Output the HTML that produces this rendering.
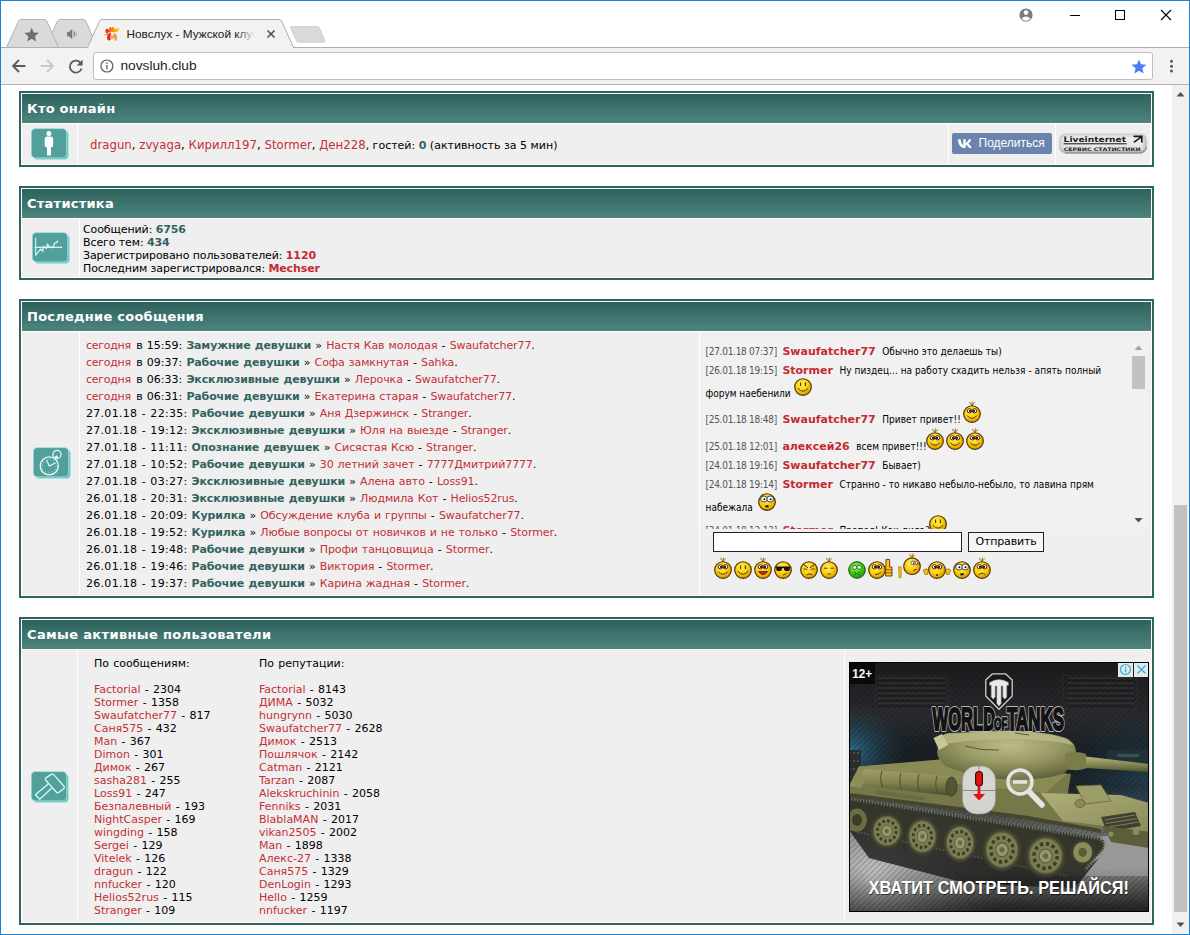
<!DOCTYPE html>
<html lang="ru">
<head>
<meta charset="utf-8">
<title>Новслух - Мужской клуб</title>
<style>
*{box-sizing:border-box;margin:0;padding:0}
html,body{width:1190px;height:935px;overflow:hidden;background:#fff}
body{position:relative;font-family:"DejaVu Sans","Liberation Sans",sans-serif;font-size:11px;color:#000}
.abs{position:absolute}
#frame{position:absolute;left:0;top:0;width:1190px;height:935px;border:1px solid #1883d7;z-index:50}
/* chrome */
#tabs{position:absolute;left:1px;top:1px;width:1188px;height:47px;background:#fff}
#toolbar{position:absolute;left:1px;top:47px;width:1188px;height:38px;background:#f2f2f2;border-top:1px solid #adadad;border-bottom:1px solid #b3b3b3}
#url{position:absolute;left:93px;top:52px;width:1060px;height:28px;background:#fff;border:1px solid #bdbdbd;border-radius:3px}
#urltext{position:absolute;left:120.500px;top:56px;font-family:"Liberation Sans",sans-serif;font-size:13.700px;line-height:20px;color:#222}
/* page */
#sb{position:absolute;left:1172px;top:85px;width:17px;height:849px;background:#f1f1f1}
#sb .thumb{position:absolute;left:2px;top:420px;width:13px;height:407px;background:#c1c1c1}
.panel{position:absolute;left:19px;width:1135px;border:2px solid #2d6560;background:#fff}
.hd{position:absolute;left:1px;top:1px;right:1px;height:29px;background:linear-gradient(#2d615c,#4e857f);color:#fff;font-weight:bold;font-size:13px;line-height:29px;padding-left:5px;letter-spacing:0.25px}
.cell{position:absolute;background:#efefef}
a{color:#c42f36;text-decoration:none}
b.t{color:#32635f}
b.r{color:#c42b32}
.cl{position:absolute;left:5.500px;white-space:nowrap;line-height:19px;font-family:"DejaVu Sans Condensed","DejaVu Sans",sans-serif;font-size:10px;color:#000}
.ts{font-size:10px;color:#555;margin-right:5.500px;letter-spacing:-.28px}
.cm{letter-spacing:.04px}.cu{font-family:"DejaVu Sans",sans-serif;font-size:11px;color:#c42b32;font-weight:bold;margin-right:6.500px}
#p3t{word-spacing:.6px}.d1{letter-spacing:.29px}.d2{letter-spacing:0}.sg{letter-spacing:-.28px;margin-right:1.400px}#p3t b{letter-spacing:-.13px}#p3t a{letter-spacing:-.1px}#p3t a.sg{letter-spacing:-.28px}
.ico{position:absolute;width:38px;height:32px}
.tx{position:absolute;white-space:nowrap}
</style>
</head>
<body>
<div id="tabs"></div>
<div id="toolbar"></div>
<div id="url"></div>
<div id="urltext">novsluh.club</div>
<svg id="tabsvg" class="abs" style="left:0;top:0" width="1190" height="86" viewBox="0 0 1190 86">
 <line x1="1" y1="47.5" x2="1189" y2="47.5" stroke="#adadad"/>
 <!-- tab 2 -->
 <path d="M45.5 47.5 L57.6 21 Q58.5 19.5 60 19.5 L83.5 19.5 Q85 19.5 85.8 21 L97.5 47.5 Z" fill="#dadada" stroke="#b2b2b2"/>
 <!-- tab 1 -->
 <path d="M6.5 47.5 L18.6 21 Q19.5 19.5 21 19.5 L44.5 19.5 Q46 19.5 46.8 21 L58.5 47.5 Z" fill="#dadada" stroke="#b2b2b2"/>
 <!-- active tab -->
 <path d="M87.5 47.5 L99.6 21 Q100.5 19.5 102 19.5 L279.2 19.5 Q280.7 19.5 281.5 21 L293.6 47.5" fill="#f2f2f2" stroke="#adadad"/>
 <rect x="88.2" y="47" width="204.8" height="2" fill="#f2f2f2"/>
 <!-- new tab button -->
 <path d="M291 26.5 L317.5 26.5 Q319 26.5 319.6 28 L325 41 Q325.4 42.3 324 42.3 L298.5 42.3 Q297 42.3 296.4 41 L290.6 28 Q290.2 26.5 291.6 26.5 Z" fill="#d9d9d9" stroke="#c4c4c4" stroke-width=".6"/>
 <!-- star -->
 <path transform="translate(31.7 34.6) scale(.7)" d="M0 -10 L2.9 -3.1 L10.4 -2.5 L4.7 2.4 L6.4 9.7 L0 5.8 L-6.4 9.7 L-4.7 2.4 L-10.4 -2.5 L-2.9 -3.1 Z" fill="#6e6e6e"/>
 <!-- speaker -->
 <g fill="#7a7a7a"><path d="M67 32 L69 32 L72.2 29 L72.2 39.2 L69 36.2 L67 36.2 Z"/><rect x="73.6" y="31.3" width="1.1" height="5.6"/><rect x="75.7" y="32.2" width="1" height="3.8" fill="#9a9a9a"/></g>
 <!-- favicon rooster -->
 <defs><linearGradient id="fav" x1="0" x2="1" y1="0" y2="0"><stop offset="0" stop-color="#f01414"/><stop offset=".3" stop-color="#f3601a"/><stop offset=".65" stop-color="#f7a51c"/><stop offset="1" stop-color="#f8e020"/></linearGradient></defs>
 <g>
  <path d="M105.600 31.800 Q105 28.800 107.200 28.800 Q108.400 29 108.800 30 Q108.800 27.200 110.300 27 Q111.200 27 111.600 28.400 Q111.800 26.800 112.800 26.800 Q113.800 27 114 28.800 Q114.400 27.800 115.200 28 Q116 28.300 116 29.400 Q117.500 27.600 119 27.900 Q119.800 29 119.200 30.600 Q117.600 32.600 114.600 32.300 Q111 31.200 108.600 32.400 Q107.800 33.600 106.800 33.400 Q105.800 33 105.600 31.800 Z" fill="url(#fav)"/>
  <path d="M104.200 34.400 L106.900 33.600 L107.200 35 L104.600 35.600 Z" fill="#f2b21a"/>
  <path d="M107.300 33.600 Q108.600 34.400 109.400 33 L110.400 32.500 L111.200 33.600 Q109.800 36 110.600 39.600 Q109.600 41 108.200 40.300 Q106.600 39.200 107 37 Q108 35.200 107.300 33.600 Z" fill="#ef2c12"/>
  <path d="M111.300 35.400 L112.700 35 L112.600 38.800 L111.300 39.800 Z" fill="#f29a3a"/>
  <path d="M113.900 33 Q115.800 33.600 116.500 36 Q117 38.600 115.800 40.800 L114.400 40.400 Q115.200 38 114.400 36.400 L113 39.600 L112.400 39 Q113.400 36 113.900 33 Z" fill="#f39a18"/>
  <path d="M116.200 34.500 Q117.400 37.500 116.200 40.500" stroke="#4a4a6a" stroke-width=".5" fill="none" opacity=".5"/>
 </g>
 <text x="126.5" y="38" font-family="Liberation Sans, sans-serif" font-size="11.800" fill="#202020" clip-path="url(#tclip)">Новслух - Мужской клуб</text>
 <rect x="236" y="22" width="24" height="22" fill="url(#tfade)"/>
 <defs><clipPath id="tclip"><rect x="120" y="20" width="139" height="26"/></clipPath><linearGradient id="tfade" x1="0" x2="1" y1="0" y2="0"><stop offset="0" stop-color="#f2f2f2" stop-opacity="0"/><stop offset=".8" stop-color="#f2f2f2"/></linearGradient></defs>
 <path d="M267.5 30.500 L274.500 37.500 M274.500 30.500 L267.500 37.500" stroke="#4a4a4a" stroke-width="1.5"/>
 <!-- account -->
 <g><circle cx="1026" cy="15" r="6.6" fill="#7b7b7b"/><circle cx="1026" cy="12.6" r="2.300" fill="#fff"/><path d="M1021.3 18.700 Q1026 14.400 1030.700 18.700 Q1026 22.600 1021.300 18.700 Z" fill="#fff"/></g>
 <!-- window controls -->
 <rect x="1070" y="15" width="10" height="1" fill="#000"/>
 <rect x="1115.500" y="10.500" width="9" height="9" fill="none" stroke="#000"/>
 <path d="M1161 10 L1171 20 M1171 10 L1161 20" stroke="#000" stroke-width="1.100"/>
 <!-- toolbar icons -->
 <g stroke="#5a5a5a" stroke-width="1.800" fill="none"><path d="M25.500 66 L13 66 M19 60 L13 66 L19 72"/></g>
 <g stroke="#c9c9c9" stroke-width="1.800" fill="none"><path d="M40.500 66 L53 66 M47 60 L53 66 L47 72"/></g>
 <g stroke="#5a5a5a" stroke-width="1.800" fill="none"><path d="M81 63.500 A6 6 0 1 0 81.600 68.500"/></g>
 <path d="M82.600 59.600 L82.600 65.400 L76.800 65.400 Z" fill="#5a5a5a"/>
 <g><circle cx="106.900" cy="66" r="6" fill="none" stroke="#5a5a5a" stroke-width="1.200"/><rect x="106.300" y="65" width="1.300" height="4.200" fill="#5a5a5a"/><rect x="106.300" y="62.600" width="1.300" height="1.400" fill="#5a5a5a"/></g>
 <path transform="translate(1139 66.600) scale(.72)" d="M0 -10 L2.900 -3.100 L10.400 -2.500 L4.700 2.400 L6.400 9.700 L0 5.800 L-6.400 9.700 L-4.700 2.400 L-10.400 -2.500 L-2.900 -3.100 Z" fill="#4f7df3"/>
 <g fill="#5a5a5a"><circle cx="1171.500" cy="61.300" r="1.500"/><circle cx="1171.500" cy="66.200" r="1.500"/><circle cx="1171.500" cy="71.100" r="1.500"/></g>
</svg>

<svg width="0" height="0" style="position:absolute">
<defs>
 <symbol id="tile" viewBox="0 0 38 32" overflow="visible">
  <rect x="2.300" y="2.500" width="35.400" height="29.200" rx="4.500" fill="#6cc3bb" stroke="#b7efe8" stroke-width=".8"/>
  <rect x=".2" y=".6" width="35.500" height="29.300" rx="4.200" fill="#52a09b" stroke="#b4ebe4" stroke-width=".7"/>
 </symbol>
 <radialGradient id="sg" cx=".42" cy=".35" r=".7"><stop offset="0" stop-color="#fff25e"/><stop offset=".5" stop-color="#fad010"/><stop offset="1" stop-color="#d98e00"/></radialGradient>
 <radialGradient id="gg" cx=".42" cy=".35" r=".7"><stop offset="0" stop-color="#9cf05a"/><stop offset=".6" stop-color="#3fc01c"/><stop offset="1" stop-color="#1f8a0c"/></radialGradient>
 <g id="face"><circle r="8.300" fill="url(#sg)" stroke="#4e3200" stroke-width="1.150"/></g>
 <g id="hair" stroke="#8a5a00" stroke-width=".9" fill="none"><path d="M0 -8.500 L-2.800 -12 M0 -8.500 L.4 -12.500 M0 -8.500 L2.800 -11.600"/></g>
 <g id="eyesw"><ellipse cx="-2.500" cy="-3.200" rx="2.300" ry="2.100" fill="#fff" stroke="#4a1818" stroke-width=".95"/><ellipse cx="2.500" cy="-3.200" rx="2.300" ry="2.100" fill="#fff" stroke="#4a1818" stroke-width=".95"/><circle cx="-1.900" cy="-3" r="1.150" fill="#2a0c0c"/><circle cx="2" cy="-3" r="1.150" fill="#2a0c0c"/></g>
 <g id="smile"><path d="M-4.600 1.800 Q0 6.800 4.600 1.800" fill="none" stroke="#5a3c00" stroke-width="1"/></g>
 <g id="sm_plain"><use href="#face"/><rect x="-3" y="-4.500" width="1.200" height="3.600" fill="#5a3c00"/><rect x="1.800" y="-4.500" width="1.200" height="3.600" fill="#5a3c00"/><path d="M-5.200 1.200 Q0 7.200 5.200 1.200" fill="none" stroke="#5a3c00" stroke-width="1"/></g>

 <g id="sm_eyes"><use href="#face"/><ellipse cx="-3" cy="-3" rx="3.300" ry="3" fill="#fff" stroke="#222" stroke-width=".8"/><ellipse cx="3.200" cy="-3" rx="3.300" ry="3" fill="#fff" stroke="#222" stroke-width=".8"/><circle cx="-2.600" cy="-2.800" r="1" fill="#111"/><circle cx="3.600" cy="-2.800" r="1" fill="#111"/><rect x="-1.600" y="3.300" width="3.200" height="2" fill="#111"/></g>
 <g id="sm_laugh"><use href="#hair"/><use href="#face"/><use href="#eyesw"/><path d="M-4.600 1.600 Q0 7.800 4.600 1.600 Z" fill="#e01818" stroke="#5a1c00" stroke-width=".8"/></g>
 <g id="sm_cool"><use href="#face"/><path d="M-8 -3.600 H8 L7 -2.400 L6.400 .6 Q4 1.600 1.600 .6 L.6 -2 H-.6 L-1.600 .6 Q-4 1.600 -6.400 .6 L-7 -2.400 Z" fill="#111"/><path d="M0 5 L3.400 3.600" stroke="#5a3c00" stroke-width="1" fill="none"/></g>
 <g id="sm_angry"><use href="#face"/><path d="M-5.600 -5.600 L-1 -2.200 M5.600 -5.600 L1 -2.200" stroke="#3a2000" stroke-width="1"/><path d="M-5 -2 L-1.600 -.6 L-5 -.2 Z M5 -2 L1.600 -.6 L5 -.2 Z" fill="#fff" stroke="#3a2000" stroke-width=".5"/><path d="M-2.600 5 Q0 3 3 4.600" stroke="#5a3c00" stroke-width="1" fill="none"/></g>
 <g id="sm_sleep"><use href="#hair"/><use href="#face"/><path d="M-5 -1.800 H-1.400 M1.400 -1.800 H5 M-1.400 4 H1.600" stroke="#5a3c00" stroke-width="1"/></g>
 <g id="sm_green"><circle r="8.300" fill="url(#gg)" stroke="#0c5a06" stroke-width="1"/><ellipse cx="-2.300" cy="-2.600" rx="2.100" ry="1.900" fill="#e8ffe0" stroke="#0c4a06" stroke-width=".7"/><ellipse cx="2.300" cy="-2.600" rx="2.100" ry="1.900" fill="#e8ffe0" stroke="#0c4a06" stroke-width=".7"/><path d="M-2.600 1.600 L-.8 3.400 L-2.600 5.400 M2.600 1.600 L.8 3.400 L2.600 5.400" stroke="#0c4a06" stroke-width=".9" fill="none"/></g>
 <g id="sm_thumb"><use href="#face"/><use href="#eyesw"/><path d="M-2 4.600 Q1.600 4.600 4 2" stroke="#5a3c00" stroke-width="1" fill="none"/><path d="M9 -10.600 H12.600 V-3 H15 V6 H8.600 Z" fill="#f5c518" stroke="#6a2a10" stroke-width=".9"/><path d="M9 -.2 H15 M9 2.800 H15" stroke="#6a2a10" stroke-width=".7"/></g>
 <g id="sm_think"><g transform="translate(0 -3.800)"><use href="#hair"/><use href="#face"/><ellipse cx="1" cy="-3.200" rx="2.200" ry="1.900" fill="#fff" stroke="#5a2a2a" stroke-width=".7"/><ellipse cx="5" cy="-3.200" rx="2" ry="1.900" fill="#fff" stroke="#5a2a2a" stroke-width=".7"/><circle cx="1.600" cy="-3" r=".8" fill="#301010"/><circle cx="5.400" cy="-3" r=".8" fill="#301010"/><path d="M1 4.400 L4.600 3" stroke="#5a3c00" stroke-width="1"/></g><path d="M-13.400 -3.200 h2.600 v11 h-2.200 Z" fill="#f5c518" stroke="#b07800" stroke-width=".7"/></g>
 <g id="sm_shrug"><path d="M-13.600 0 q2.600 -2.400 5 0 l-1 4.400 h-2.600 Z M13.600 0 q-2.600 -2.400 -5 0 l1 4.400 h2.600 Z" fill="#f5c518" stroke="#a06a00" stroke-width=".8"/><use href="#face"/><use href="#eyesw"/><rect x="-1" y="4.400" width="2" height="1.400" fill="#3a2000"/></g>
 <g id="sm_sad"><use href="#hair"/><use href="#face"/><use href="#eyesw"/><path d="M-3.400 5 Q0 1.600 3.400 5" stroke="#5a3c00" stroke-width="1" fill="none"/></g>
 <g id="sm_hair"><use href="#hair"/><use href="#face"/><use href="#eyesw"/><use href="#smile"/></g>
</defs>
</svg>
<!-- PANEL 1 -->
<div class="panel" style="top:91px;height:76px">
 <div class="hd">Кто онлайн</div>
 <div class="cell" style="left:1px;top:31px;width:55px;height:40px"></div>
 <div class="cell" style="left:57px;top:31px;width:870px;height:40px"></div>
 <div class="cell" style="left:928px;top:31px;width:106px;height:40px"></div>
 <div class="cell" style="left:1035px;top:31px;width:94px;height:40px"></div>
 <svg class="ico" style="left:10px;top:35px" viewBox="0 0 38 32"><use href="#tile"/><g fill="#fdfefe"><circle cx="17.900" cy="5.600" r="2.500"/><rect x="13.700" y="8.400" width="8.500" height="11" rx="2.600"/><rect x="16" y="12" width="4" height="15.500" rx=".5"/></g></svg>
 <div class="abs" id="vk" style="left:931px;top:40px;width:100px;height:21px;background:#6b84ad;border-radius:2px">
  <svg class="abs" style="left:5.500px;top:5.500px" width="15" height="9.500" viewBox="0 0 30 19"><path fill="#fff" d="M0 .6 H5.200 C5.600 7 8.400 11.800 10.600 12.600 V.6 H15.400 V7.600 C18 7.200 20.600 4 21.600 .6 H26.400 C25.600 4.800 22.600 8 20.400 9.400 C22.600 10.400 26.200 13.400 27.600 18.400 H22.400 C21.200 15 18.600 12.200 15.400 11.800 V18.400 H14.400 C5.400 18.400 .3 11.600 0 .6 Z"/></svg>
  <div class="abs" style="left:26.500px;top:2.500px;font-family:'Liberation Sans',sans-serif;font-size:12px;line-height:15px;color:#fff;white-space:nowrap">Поделиться</div>
 </div>
 <svg class="abs" id="li" style="left:1038px;top:40px" width="88" height="21" viewBox="0 0 88 21">
  <defs><linearGradient id="lig" x1="0" x2="0" y1="0" y2="1"><stop offset="0" stop-color="#d4d4d4"/><stop offset=".25" stop-color="#ededed"/><stop offset=".75" stop-color="#e4e4e4"/><stop offset="1" stop-color="#a8a8a8"/></linearGradient><linearGradient id="lih" x1="0" x2="1" y1="0" y2="0"><stop offset="0" stop-color="#000" stop-opacity=".12"/><stop offset=".06" stop-color="#000" stop-opacity="0"/><stop offset=".94" stop-color="#000" stop-opacity="0"/><stop offset="1" stop-color="#000" stop-opacity=".18"/></linearGradient></defs>
  <rect x=".5" y=".8" width="87" height="19.400" rx="6" fill="url(#lig)" stroke="#c9c9c9" stroke-width=".6"/>
  <rect x=".5" y=".8" width="87" height="19.400" rx="6" fill="url(#lih)"/><path d="M6 20 H81 Q87 19 87.300 14" fill="none" stroke="#6a6a6a" stroke-width=".9" opacity=".8"/>
  <text x="4.600" y="9" font-family="DejaVu Sans, sans-serif" font-weight="bold" font-size="7.500" textLength="62.500" lengthAdjust="spacingAndGlyphs" fill="#1a1a1a">Liveinternet</text>
  <rect x="4.600" y="10.300" width="63" height="1" fill="#111"/>
  <path d="M74.500 3.400 H82.800 V9.400 M82.300 3.900 L74.800 9.400" fill="none" stroke="#1a1a1a" stroke-width="1.700"/>
  <text x="4.800" y="17.800" font-family="DejaVu Sans, sans-serif" font-weight="bold" font-size="4.800" textLength="77" lengthAdjust="spacingAndGlyphs" fill="#2a2a2a">СЕРВИС  СТАТИСТИКИ</text>
 </svg>
 <div class="tx" id="p1t" style="left:69px;top:44px;font-size:11px;line-height:16px"><span id="p1n" style="font-size:13px;letter-spacing:.02px;font-family:'DejaVu Sans Condensed','DejaVu Sans',sans-serif"><a>dragun</a>, <a>zvyaga</a>, <a>Кирилл197</a>, <a>Stormer</a>, <a>Ден228</a></span><span id="p1r">, гостей: <b class="t">0</b> (активность за 5 мин)</span></div>
</div>

<!-- PANEL 2 -->
<div class="panel" style="top:186px;height:94px">
 <div class="hd">Статистика</div>
 <div class="cell" style="left:1px;top:31px;width:57px;height:58px"></div>
 <div class="cell" style="left:59px;top:31px;width:1071px;height:58px"></div>
 <svg class="ico" style="left:11px;top:44px" viewBox="0 0 38 32"><use href="#tile"/><g fill="none" stroke="#e6fbf8" stroke-width="1"><path d="M3.700 5.700 V23.500"/><path d="M2.400 15.300 H30.200" stroke-width="1.200"/><path d="M3.700 23.200 L8.600 17.200 L10.700 19.100 L11.500 14.600 L14.300 16.300 L15.400 12.300 L17.300 14.600 L19.200 15.700 L21.400 14.600 L22.500 11.200 L24.800 10.600 L25.900 8.600" stroke-width="1.200"/></g></svg>
 <div class="tx" id="p2t" style="left:62px;top:34.500px;line-height:13px;letter-spacing:-.1px">Сообщений: <b class="t">6756</b><br>Всего тем: <b class="t">434</b><br>Зарегистрировано пользователей: <b class="r">1120</b><br>Последним зарегистрировался: <b class="r">Mechser</b></div>
</div>

<!-- PANEL 3 -->
<div class="panel" style="top:299px;height:299px">
 <div class="hd">Последние сообщения</div>
 <div class="cell" style="left:1px;top:31px;width:57px;height:263px"></div>
 <div class="cell" style="left:59px;top:31px;width:619px;height:263px"></div>
 <div class="cell" style="left:679px;top:31px;width:451px;height:263px"></div>
 <svg class="ico" style="left:12px;top:146px" viewBox="0 0 38 32"><use href="#tile"/><g fill="none" stroke="#e6fbf8"><circle cx="16.300" cy="18.900" r="9" stroke-width="1.400"/><circle cx="24" cy="7.500" r="4.100" stroke-width="1.200"/><path d="M21.300 10 L23.800 8.300 L25.300 10.300 L22.600 12" fill="#e6fbf8" stroke="none"/><path d="M13.600 12.900 L16.300 18.900 L22.300 16.100" stroke-width="1.100"/><g stroke-width="1" stroke-dasharray="1 2.560" opacity=".8"><circle cx="16.300" cy="18.900" r="6.800"/></g></g></svg>
<div id="chat" class="abs" style="left:679px;top:38px;width:447px;height:190px;overflow:hidden;background:#f1f1f1">
<div class="cl" style="top:2.7px"><span class="ts">[27.01.18 07:37]</span><b class="cu">Swaufatcher77</b><span class="cm">Обычно это делаешь ты)</span></div>
<div class="cl" style="top:21.7px"><span class="ts">[26.01.18 19:15]</span><b class="cu">Stormer</b><span class="cm">Ну пиздец... на работу схадить нельзя - апять полный</span></div>
<div class="cl" style="top:45.3px"><span class="cm0">форум наебенили</span></div>
<div class="cl" style="top:70.7px"><span class="ts">[25.01.18 18:48]</span><b class="cu">Swaufatcher77</b><span class="cm">Привет привет!!</span></div>
<div class="cl" style="top:97.7px"><span class="ts">[25.01.18 12:01]</span><b class="cu">алексей26</b><span class="cm">всем привет!!!</span></div>
<div class="cl" style="top:116.7px"><span class="ts">[24.01.18 19:16]</span><b class="cu">Swaufatcher77</b><span class="cm">Бывает)</span></div>
<div class="cl" style="top:135.7px"><span class="ts">[24.01.18 19:14]</span><b class="cu">Stormer</b><span class="cm">Странно - то никаво небыло-небыло, то лавина прям</span></div>
<div class="cl" style="top:158.7px"><span class="cm0">набежала</span></div>
<div class="cl" style="top:181.7px"><span class="ts">[24.01.18 12:12]</span><b class="cu">Stormer</b><span class="cm">Пропол! Как дила?</span></div>
<svg class="abs" style="left:86.4px;top:30.2px" width="34" height="30" viewBox="-17 -18 34 30"><use href="#sm_plain"/></svg>
<svg class="abs" style="left:255.4px;top:57.0px" width="34" height="30" viewBox="-17 -18 34 30"><use href="#sm_hair"/></svg>
<svg class="abs" style="left:217.5px;top:83.5px" width="34" height="30" viewBox="-17 -18 34 30"><use href="#sm_hair"/></svg>
<svg class="abs" style="left:237.7px;top:83.5px" width="34" height="30" viewBox="-17 -18 34 30"><use href="#sm_hair"/></svg>
<svg class="abs" style="left:257.5px;top:83.5px" width="34" height="30" viewBox="-17 -18 34 30"><use href="#sm_hair"/></svg>
<svg class="abs" style="left:49.5px;top:144.5px" width="34" height="30" viewBox="-17 -18 34 30"><use href="#sm_eyes"/></svg>
<svg class="abs" style="left:220.9px;top:167.0px" width="34" height="30" viewBox="-17 -18 34 30"><use href="#sm_plain"/></svg>
<div class="abs" style="left:430px;top:0;width:17px;height:190px;background:#f1f1f1"></div>
<div class="abs" style="left:432px;top:17px;width:13px;height:33px;background:#c1c1c1"></div>
<svg class="abs" style="left:430px;top:0" width="17" height="190"><path d="M4.500 11 L8.500 6.500 L12.500 11 Z" fill="#a3a3a3"/><path d="M4.500 179 L8.500 183.500 L12.500 179 Z" fill="#505050"/></svg>
</div>
<div class="abs" style="left:692px;top:231px;width:249px;height:20px;background:#fff;border:1px solid #222"></div>
<div class="abs" style="left:947px;top:231px;width:76px;height:20px;background:#f6f6f6;border:1px solid #222;font-size:11px;line-height:17px;text-align:center;letter-spacing:-.15px">Отправить</div>
<svg class="abs" style="left:684.9px;top:250.7px" width="34" height="30" viewBox="-17 -18 34 30"><use href="#sm_hair"/></svg>
<svg class="abs" style="left:705.0px;top:250.7px" width="34" height="30" viewBox="-17 -18 34 30"><use href="#sm_plain"/></svg>
<svg class="abs" style="left:725.1px;top:250.7px" width="34" height="30" viewBox="-17 -18 34 30"><use href="#sm_laugh"/></svg>
<svg class="abs" style="left:745.0px;top:250.7px" width="34" height="30" viewBox="-17 -18 34 30"><use href="#sm_cool"/></svg>
<svg class="abs" style="left:770.9px;top:250.7px" width="34" height="30" viewBox="-17 -18 34 30"><use href="#sm_angry"/></svg>
<svg class="abs" style="left:791.0px;top:250.7px" width="34" height="30" viewBox="-17 -18 34 30"><use href="#sm_sleep"/></svg>
<svg class="abs" style="left:819.0px;top:250.7px" width="34" height="30" viewBox="-17 -18 34 30"><use href="#sm_green"/></svg>
<svg class="abs" style="left:838.8px;top:250.7px" width="34" height="30" viewBox="-17 -18 34 30"><use href="#sm_thumb"/></svg>
<svg class="abs" style="left:874.0px;top:250.7px" width="34" height="30" viewBox="-17 -18 34 30"><use href="#sm_think"/></svg>
<svg class="abs" style="left:899.0px;top:250.7px" width="34" height="30" viewBox="-17 -18 34 30"><use href="#sm_shrug"/></svg>
<svg class="abs" style="left:924.0px;top:250.7px" width="34" height="30" viewBox="-17 -18 34 30"><use href="#sm_eyes"/></svg>
<svg class="abs" style="left:943.9px;top:250.7px" width="34" height="30" viewBox="-17 -18 34 30"><use href="#sm_sad"/></svg>
 <div class="tx" id="p3t" style="left:65px;top:36px;line-height:17px">
<a class="sg">сегодня</a> <span class="d2">в 15:59:</span> <b class="t">Замужние девушки</b> » <a>Настя Кав молодая</a> - <a>Swaufatcher77</a>.<br>
<a class="sg">сегодня</a> <span class="d2">в 09:37:</span> <b class="t">Рабочие девушки</b> » <a>Софа замкнутая</a> - <a>Sahka</a>.<br>
<a class="sg">сегодня</a> <span class="d2">в 06:33:</span> <b class="t">Эксклюзивные девушки</b> » <a>Лерочка</a> - <a>Swaufatcher77</a>.<br>
<a class="sg">сегодня</a> <span class="d2">в 06:31:</span> <b class="t">Рабочие девушки</b> » <a>Екатерина старая</a> - <a>Swaufatcher77</a>.<br>
<span class="d1">27.01.18 - 22:35:</span> <b class="t">Рабочие девушки</b> » <a>Аня Дзержинск</a> - <a>Stranger</a>.<br>
<span class="d1">27.01.18 - 19:12:</span> <b class="t">Эксклюзивные девушки</b> » <a>Юля на выезде</a> - <a>Stranger</a>.<br>
<span class="d1">27.01.18 - 11:11:</span> <b class="t">Опознание девушек</b> » <a>Сисястая Ксю</a> - <a>Stranger</a>.<br>
<span class="d1">27.01.18 - 10:52:</span> <b class="t">Рабочие девушки</b> » <a>30 летний зачет</a> - <a>7777Дмитрий7777</a>.<br>
<span class="d1">27.01.18 - 03:27:</span> <b class="t">Эксклюзивные девушки</b> » <a>Алена авто</a> - <a>Loss91</a>.<br>
<span class="d1">26.01.18 - 20:31:</span> <b class="t">Эксклюзивные девушки</b> » <a>Людмила Кот</a> - <a>Helios52rus</a>.<br>
<span class="d1">26.01.18 - 20:09:</span> <b class="t">Курилка</b> » <a>Обсуждение клуба и группы</a> - <a>Swaufatcher77</a>.<br>
<span class="d1">26.01.18 - 19:52:</span> <b class="t">Курилка</b> » <a>Любые вопросы от новичков и не только</a> - <a>Stormer</a>.<br>
<span class="d1">26.01.18 - 19:48:</span> <b class="t">Рабочие девушки</b> » <a>Профи танцовщица</a> - <a>Stormer</a>.<br>
<span class="d1">26.01.18 - 19:46:</span> <b class="t">Рабочие девушки</b> » <a>Виктория</a> - <a>Stormer</a>.<br>
<span class="d1">26.01.18 - 19:37:</span> <b class="t">Рабочие девушки</b> » <a>Карина жадная</a> - <a>Stormer</a>.
 </div>
</div>

<!-- PANEL 4 -->
<div class="panel" style="top:617px;height:308px">
 <div class="hd" style="letter-spacing:.36px">Самые активные пользователи</div>
 <div class="cell" style="left:1px;top:31px;width:55px;height:272px"></div>
 <div class="cell" style="left:57px;top:31px;width:766px;height:272px"></div>
 <div class="cell" style="left:824px;top:31px;width:306px;height:272px"></div>
 <svg class="ico" style="left:10px;top:151.500px" viewBox="0 0 38 32"><use href="#tile"/><g fill="none" stroke="#dcf7f3" stroke-width="1.300" stroke-linejoin="round"><path d="M15.300 6.600 L20.300 3.400 Q21.800 2.600 23 3.900 L33 15.200 Q34 16.700 32.600 17.800 L28 21.300 Q26.400 22.300 25.200 21 L14.800 9.300 Q13.800 7.700 15.300 6.600 Z"/><path d="M17.500 12.700 L4.400 23.800 L8.700 28.200 L20.800 17"/></g></svg>
<svg id="ad" class="abs" style="left:828px;top:43px" width="300" height="250" viewBox="0 0 300 250">
<defs>
 <linearGradient id="abg" x1="0" x2="0" y1="0" y2="1">
  <stop offset="0" stop-color="#1b1c1e"/><stop offset=".22" stop-color="#2a2c2f"/><stop offset=".36" stop-color="#191f24"/><stop offset=".5" stop-color="#1d2326"/><stop offset=".6" stop-color="#4a4b4b"/><stop offset=".72" stop-color="#777878"/><stop offset=".86" stop-color="#7d7d7c"/><stop offset="1" stop-color="#3c3b38"/></linearGradient>
 <radialGradient id="aglowL" cx="0" cy=".36" r=".2" gradientTransform="scale(1 1)"><stop offset="0" stop-color="#3587ad" stop-opacity=".8"/><stop offset="1" stop-color="#1f3d4d" stop-opacity="0"/></radialGradient>
 <radialGradient id="aglowR" cx="1" cy=".47" r=".3"><stop offset="0" stop-color="#2a5d75" stop-opacity=".5"/><stop offset="1" stop-color="#1f3d4d" stop-opacity="0"/></radialGradient>
 <radialGradient id="afloor" cx=".08" cy=".86" r=".42"><stop offset="0" stop-color="#d8d8d8" stop-opacity=".85"/><stop offset="1" stop-color="#999" stop-opacity="0"/></radialGradient>
 <pattern id="ahatch" width="4" height="4" patternUnits="userSpaceOnUse" patternTransform="rotate(-45)"><rect width="4" height="1.300" fill="#000" opacity=".2"/></pattern>
 <pattern id="ashut" width="4" height="5" patternUnits="userSpaceOnUse"><rect width="4" height="2.600" fill="#3a3b3d"/><rect y="2.600" width="4" height="2.400" fill="#18191a"/></pattern>
 <radialGradient id="tur" cx=".52" cy=".3" r=".75" gradientTransform="translate(0 0)"><stop offset="0" stop-color="#bcbc88"/><stop offset=".45" stop-color="#9a9b66"/><stop offset=".8" stop-color="#737448"/><stop offset="1" stop-color="#55563a"/></radialGradient>
 <linearGradient id="hul" x1="0" x2="1" y1="0" y2="1"><stop offset="0" stop-color="#aeae78"/><stop offset="1" stop-color="#8a8b59"/></linearGradient>
 <linearGradient id="drm" x1="0" x2="0" y1="0" y2="1"><stop offset="0" stop-color="#a0a069"/><stop offset=".5" stop-color="#82834f"/><stop offset="1" stop-color="#494a2d"/></linearGradient>
 <linearGradient id="gun" x1="0" x2="0" y1="0" y2="1"><stop offset="0" stop-color="#b2b27a"/><stop offset=".5" stop-color="#878853"/><stop offset="1" stop-color="#525331"/></linearGradient>
 <linearGradient id="ashade" x1="0" x2="0" y1="0" y2="1"><stop offset="0" stop-color="#000" stop-opacity="0"/><stop offset="1" stop-color="#000" stop-opacity=".42"/></linearGradient>
 <g id="wheel">
  <circle r="20" fill="#3f4032"/><circle r="16.500" fill="#7c7d52"/><circle r="16.500" fill="none" stroke="#5c5d3a" stroke-width="1.500"/>
  <circle r="11.500" fill="none" stroke="#3c3d27" stroke-width="3.400" stroke-dasharray="3.200 2.820"/>
  <circle r="6.500" fill="#96976a" stroke="#55563a" stroke-width="1"/><circle r="2.600" fill="#66673f"/>
 </g>
 <linearGradient id="wot" x1="0" x2="0" y1="0" y2="1"><stop offset="0" stop-color="#3a3a3a"/><stop offset=".5" stop-color="#0c0c0c"/><stop offset="1" stop-color="#2c2c2c"/></linearGradient>
</defs>
<rect width="300" height="250" fill="url(#abg)"/>
<rect x="29" y="15" width="67" height="30" fill="url(#ashut)" opacity=".5"/><rect x="26.500" y="13.500" width="72" height="34" fill="none" stroke="#5a2a2a" stroke-width=".6" opacity=".6"/>
<rect x="219" y="15" width="66" height="30" fill="url(#ashut)" opacity=".5"/><rect x="214.500" y="13.500" width="73" height="34" fill="none" stroke="#5a2a2a" stroke-width=".6" opacity=".6"/>
<rect width="300" height="250" fill="url(#aglowL)"/>
<rect width="300" height="250" fill="url(#aglowR)"/>
<rect width="300" height="250" fill="url(#afloor)"/>
<rect width="300" height="250" fill="url(#ahatch)"/>
<!-- crates left -->
<rect x="0" y="88" width="12" height="34" fill="#2a2d2c"/><path d="M0 91 h11 M0 99 h11 M0 107 h11 M0 115 h11" stroke="#5a5a5a" stroke-width="1.400" stroke-dasharray="2 2"/>
<rect x="258" y="88" width="42" height="20" fill="#22323a" opacity=".85"/><rect x="268" y="92" width="22" height="3" fill="#4a5a60" opacity=".7"/>
<!-- floor light right -->
<path d="M236 176 L300 170 L300 214 L228 214 Z" fill="#a6a6a6" opacity=".75"/>
<!-- shadow under tank -->
<path d="M0 168 L20 196 L120 222 L226 226 L250 196 L236 206 L10 170 Z" fill="#1c1c1a" opacity=".8"/>
<!-- track -->
<path d="M0 135 L6 137 L252 176 Q258 180 254 188 L236 208 Q228 216 218 214 L8 170 L0 166 Z" fill="#34352b"/>
<path d="M2 137 L252 177" stroke="#77786a" stroke-width="3" stroke-dasharray="1.500 1.500" opacity=".85"/>
<path d="M252 177 Q258 182 254 188 L236 208" stroke="#8a8b7c" stroke-width="3.500" stroke-dasharray="1.500 1.500" fill="none" opacity=".8"/>
<path d="M8 170 L218 214" stroke="#55564a" stroke-width="2" stroke-dasharray="2 1.500" opacity=".8"/>
<!-- rear sprocket -->
<ellipse cx="8" cy="158" rx="10" ry="11.500" fill="#6b6c44"/><ellipse cx="8" cy="158" rx="5" ry="6" fill="#3c3d27"/>
<use href="#wheel" transform="translate(37.8 169) scale(0.820 0.890)"/><use href="#wheel" transform="translate(73.4 174.5) scale(0.810 0.960)"/><use href="#wheel" transform="translate(111 180.8) scale(0.830 0.980)"/><use href="#wheel" transform="translate(153 187.8) scale(0.975 1.070)"/><use href="#wheel" transform="translate(196.6 194) scale(1.010 1.080)"/>
<!-- idler front -->
<ellipse cx="233.700" cy="190.300" rx="12" ry="12.800" fill="#3d3e30"/><ellipse cx="233.700" cy="190.300" rx="9.500" ry="10.300" fill="#8c8d5b"/><ellipse cx="233.700" cy="190.300" rx="4.200" ry="4.600" fill="#5a5b38"/>
<!-- rear plate + hull side -->
<path d="M0 124 L10 104.500 L98 98 L222 112 L214 159 L254.600 164 L252 170 L176 157 L0 134.500 Z" fill="#77784a"/>
<path d="M0 131 L176 153.500 L252 167 L252 171 L176 157.500 L0 135 Z" fill="#45462d"/>
<path d="M0 124 L10 104.500 L22 106 L12 126 Z" fill="#8d8e59"/>
<!-- hull top deck -->
<path d="M10 104.500 L96 97 L218 112 L196 131 L108 122 L20 110 Z" fill="#8a8b54"/>
<!-- glacis -->
<path d="M191.600 131 L272 133 L300 141 L300 170 L254.600 164 L214 159 Z" fill="url(#hul)"/>
<path d="M227 124 L252 123 L262 139 L236 142 Z" fill="#9c9c66" stroke="#66673f" stroke-width=".8"/>
<ellipse cx="231" cy="141.500" rx="5" ry="4" fill="#8a8b58" stroke="#5a5b38" stroke-width=".7"/>
<path d="M252 155 L286 150 L292 164 L258 170 Z" fill="#3f402d"/><path d="M256 158 l30 -5 M257 161.500 l31 -5 M259 165 l31 -5" stroke="#85856a" stroke-width=".9"/>
<path d="M254.600 164 L300 170 L300 186 L262 180 Z" fill="#5c5d3a"/>
<circle cx="287" cy="170" r="3.300" fill="#8a8b58"/><circle cx="262" cy="172" r="2.600" fill="#8a8b58"/>
<!-- drum -->
<path d="M15 107 Q11 115 17 124 L104 134 Q109 126 105 119 L103 114.500 Z" fill="url(#drm)"/>
<path d="M33 109 Q30 118 34 126 M52 111 Q49 120 53 128 M70 112.500 Q67 122 71 130 M88 114 Q85 123 89 132" stroke="#525331" stroke-width="1.100" fill="none"/>
<ellipse cx="102.500" cy="124.600" rx="5.500" ry="9.500" fill="#545534" stroke="#3a3b24" stroke-width=".8"/>
<path d="M26 128 L76 135 L76 139 L26 132 Z" fill="#6b6c40"/>
<!-- turret -->
<path d="M88 90 L90.500 77 Q92.500 72 100 71 L160 68.500 Q200 70 217 76 Q226.500 80 227 90 Q225 104 214 112 Q186 120 151 117 Q116 113 97 104 Q88.500 98 88 90 Z" fill="url(#tur)"/>
<path d="M92 75 Q94 72.300 100 71.500 L160 69 Q200 70.500 216 76.500 Q222 79 224 83 Q196 77 160 77 Q120 77 93 83 Q90.500 79 92 75 Z" fill="#bdbd8a" opacity=".75"/>
<path d="M84.500 76 L93 72 L99 83 L90 88 Z" fill="#c9c79a"/>
<path d="M116 84 q16 5 34 4 M166 71 l14 2" stroke="#5b5c36" stroke-width="1" fill="none"/>
<!-- gun -->
<path d="M216 92 Q226 88 237 92 L238 106 Q228 110 218 107 Z" fill="#7b7c4a"/>
<path d="M237 94.500 L300 102 L300 110 L237 106 Z" fill="url(#gun)"/>
<rect x="0" y="205" width="300" height="45" fill="url(#ashade)"/>
<!-- WoT logo -->
<g>
 <path d="M143.500 11.800 H156.500 L163.200 18 V34 L150 47.200 L136.800 34 V18 Z" fill="#191919" stroke="#cfcfcf" stroke-width="1.300" stroke-linejoin="round"/>
 <path d="M140.500 20.500 Q150 14.500 159.500 20.500 V23.300 H157.800 V35 L155.800 37.300 L153.800 35 V24 H152.200 V41.500 L150 44.300 L147.800 41.500 V24 H146.200 V35 L144.200 37.300 L142.200 35 V23.300 H140.500 Z" fill="#e9e9e9" stroke="#8a8a8a" stroke-width=".5"/>
 <g font-family="Liberation Sans, sans-serif" font-weight="bold">
  <g transform="translate(83.500 68) scale(.535 1)">
   <text font-size="31" fill="#b9b9b9" stroke="#b9b9b9" stroke-width="3.400" stroke-linejoin="round" vector-effect="non-scaling-stroke">WORLD</text>
   <text font-size="31" fill="#121212" stroke="#121212" stroke-width="1.600" vector-effect="non-scaling-stroke">WORLD</text>
  </g>
  <g transform="translate(145 68) scale(.6 1)">
   <text font-size="16" fill="#b9b9b9" stroke="#b9b9b9" stroke-width="2.800" stroke-linejoin="round" vector-effect="non-scaling-stroke">OF</text>
   <text font-size="16" fill="#121212" stroke="#121212" stroke-width="1.200" vector-effect="non-scaling-stroke">OF</text>
  </g>
  <g transform="translate(158 68) scale(.545 1)">
   <text font-size="31" fill="#b9b9b9" stroke="#b9b9b9" stroke-width="3.400" stroke-linejoin="round" vector-effect="non-scaling-stroke">TANKS</text>
   <text font-size="31" fill="#121212" stroke="#121212" stroke-width="1.600" vector-effect="non-scaling-stroke">TANKS</text>
  </g>
 </g>
</g>
<!-- mouse + magnifier overlay -->
<g>
 <rect x="113.500" y="104" width="33" height="48" rx="14" fill="#dcdcdc" opacity=".93" stroke="#9a9a9a" stroke-width=".8"/>
 <path d="M113.500 128.500 H146.500 M130 104 V128.500" stroke="#8a8a8a" stroke-width="1"/>
 <rect x="126.600" y="109.500" width="6.800" height="14.500" rx="3.400" fill="#e01212" stroke="#3a0a0a" stroke-width="1.200"/>
 <path d="M128.600 124 h2.800 v8 h4.600 l-6 6.500 l-6 -6.500 h4.600 Z" fill="#e01212"/>
 <circle cx="171" cy="120" r="12" fill="#fff" fill-opacity=".12" stroke="#e4e4e4" stroke-width="3.400"/>
 <rect x="164" y="118.300" width="14" height="3.400" rx=".8" fill="#e4e4e4"/>
 <path d="M180.500 130 L193 143" stroke="#e4e4e4" stroke-width="5.500" stroke-linecap="round"/>
</g>
<!-- 12+ -->
<rect width="26" height="22" fill="#0a0a0a"/>
<text x="3.200" y="16.300" font-family="Liberation Sans, sans-serif" font-weight="bold" font-size="12.500" fill="#fff" textLength="19.800" lengthAdjust="spacingAndGlyphs">12+</text>
<!-- adchoices -->
<rect x="269" y="0" width="15" height="15" fill="#e6e8ea"/><rect x="285" y="0" width="15" height="15" fill="#e6e8ea"/>
<circle cx="276.500" cy="7.500" r="5" fill="none" stroke="#2bb3d6" stroke-width="1.200"/><rect x="275.900" y="6.600" width="1.300" height="3.800" fill="#2bb3d6"/><rect x="275.900" y="4.400" width="1.300" height="1.300" fill="#2bb3d6"/>
<path d="M288.500 3.500 L296.500 11.500 M296.500 3.500 L288.500 11.500" stroke="#2bb3d6" stroke-width="1.300"/>
<!-- slogan -->
<text x="20" y="232.800" font-family="Liberation Sans, sans-serif" font-weight="bold" font-size="19.200" fill="#000" opacity=".55" textLength="260.500" lengthAdjust="spacingAndGlyphs">ХВАТИТ СМОТРЕТЬ. РЕШАЙСЯ!</text>
<text x="19.500" y="231.800" font-family="Liberation Sans, sans-serif" font-weight="bold" font-size="19.200" fill="#fff" textLength="260.500" lengthAdjust="spacingAndGlyphs">ХВАТИТ СМОТРЕТЬ. РЕШАЙСЯ!</text>
<rect x=".5" y=".5" width="299" height="249" fill="none" stroke="#000"/>
</svg>
 <div class="tx" id="p4a" style="left:73px;top:38px;line-height:13px;word-spacing:.8px">По сообщениям:<br><br>
<a>Factorial</a> - 2304<br><a>Stormer</a> - 1358<br><a>Swaufatcher77</a> - 817<br><a>Саня575</a> - 432<br><a>Man</a> - 367<br><a>Dimon</a> - 301<br><a>Димок</a> - 267<br><a>sasha281</a> - 255<br><a>Loss91</a> - 247<br><a>Безпалевный</a> - 193<br><a>NightCasper</a> - 169<br><a>wingding</a> - 158<br><a>Sergei</a> - 129<br><a>Vitelek</a> - 126<br><a>dragun</a> - 122<br><a>nnfucker</a> - 120<br><a>Helios52rus</a> - 115<br><a>Stranger</a> - 109</div>
 <div class="tx" id="p4b" style="left:238px;top:38px;line-height:13px;word-spacing:.8px">По репутации:<br><br>
<a>Factorial</a> - 8143<br><a>ДИМА</a> - 5032<br><a>hungrynn</a> - 5030<br><a>Swaufatcher77</a> - 2628<br><a>Димок</a> - 2513<br><a>Пошлячок</a> - 2142<br><a>Catman</a> - 2121<br><a>Tarzan</a> - 2087<br><a>Alekskruchinin</a> - 2058<br><a>Fenniks</a> - 2031<br><a>BlablaMAN</a> - 2017<br><a>vikan2505</a> - 2002<br><a>Man</a> - 1898<br><a>Алекс-27</a> - 1338<br><a>Саня575</a> - 1329<br><a>DenLogin</a> - 1293<br><a>Hello</a> - 1259<br><a>nnfucker</a> - 1197</div>
</div>

<div id="sb"><div class="thumb"></div><svg class="abs" style="left:0;top:0" width="17" height="849"><path d="M4.500 11.500 L8.500 7 L12.500 11.500 Z" fill="#505050"/><path d="M4.500 837.500 L8.500 842 L12.500 837.500 Z" fill="#505050"/></svg></div>
<div id="frame"></div>
</body>
</html>
